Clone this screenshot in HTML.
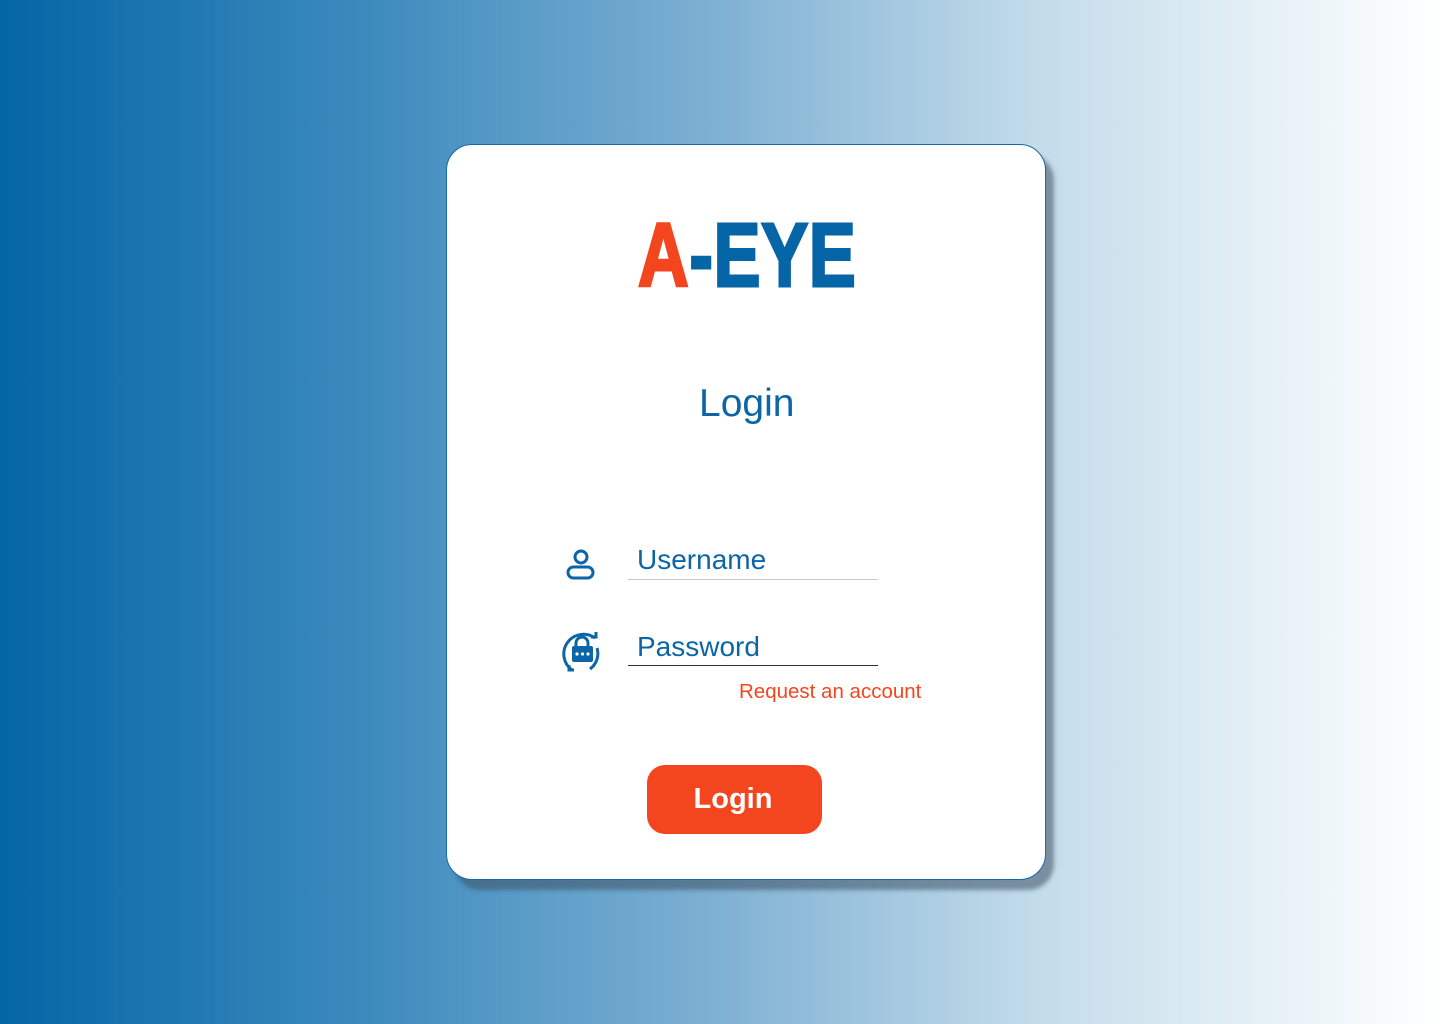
<!DOCTYPE html>
<html><head><meta charset="utf-8"><style>
html,body{margin:0;padding:0}
body{width:1440px;height:1024px;position:relative;overflow:hidden;font-family:"Liberation Sans",sans-serif;
background:linear-gradient(90deg,#0465a5 0%,#3b8abd 25%,#7fb1d3 50%,#c3dcea 72%,#ffffff 100%)}
.card{position:absolute;left:446px;top:144px;width:598px;height:734px;background:#fff;border:1px solid #1a6aa6;border-radius:26px;box-shadow:8px 10px 4px rgba(60,80,100,0.55)}
.logo{position:absolute;left:638px;top:211px;font-weight:bold;font-size:90px;line-height:90px;transform:scaleX(0.78);transform-origin:left top;letter-spacing:1px;white-space:nowrap;-webkit-text-stroke:3px currentColor}
.t{position:absolute;color:#0b65a6;white-space:nowrap}
.line{position:absolute;left:628px;width:250px;height:1px}
.btn{position:absolute;left:647px;top:765px;width:175px;height:69px;background:#f3461f;border-radius:18px;color:#fff;font-weight:bold;font-size:29px;line-height:69px;text-align:center;text-indent:-3px}
</style></head><body>
<div class="card"></div>
<div class="logo"><span style="color:#f3461f">A</span><span style="color:#0565a6">-EYE</span></div>
<div class="t" style="left:699px;top:380px;font-size:39px;line-height:48px">Login</div>
<div class="t" style="left:637px;top:541px;font-size:28px;line-height:38px">Username</div>
<div class="line" style="top:579px;background:#c8c8c8"></div>
<div class="t" style="left:637px;top:628px;font-size:28px;line-height:38px">Password</div>
<div class="line" style="top:665px;background:#333"></div>
<div class="t" style="left:739px;top:679px;font-size:20.5px;line-height:26px;color:#f3461f">Request an account</div>
<svg style="position:absolute;left:560px;top:540px" width="45" height="140" viewBox="0 0 45 140">
<g fill="none" stroke="#0b65a6" stroke-width="3">
<circle cx="21" cy="17" r="6"/>
<rect x="8" y="27" width="25" height="11" rx="5.5"/>
<path d="M12 130 A19 19 0 0 1 35 98"/>
<path d="M31 97 L36 97 L36 92"/>
<path d="M30 129 A19 19 0 0 0 37 108" />
<path d="M14 130 L9 130 L9 125"/>
<path d="M16 107 V103 a6 6 0 0 1 12 0 V107"/>
</g>
<rect x="12" y="106" width="21" height="16" rx="2" fill="#0b65a6"/>
<circle cx="17" cy="114" r="1.6" fill="#fff"/><circle cx="22.5" cy="114" r="1.6" fill="#fff"/><circle cx="28" cy="114" r="1.6" fill="#fff"/>
</svg>
<div class="btn">Login</div>
</body></html>
